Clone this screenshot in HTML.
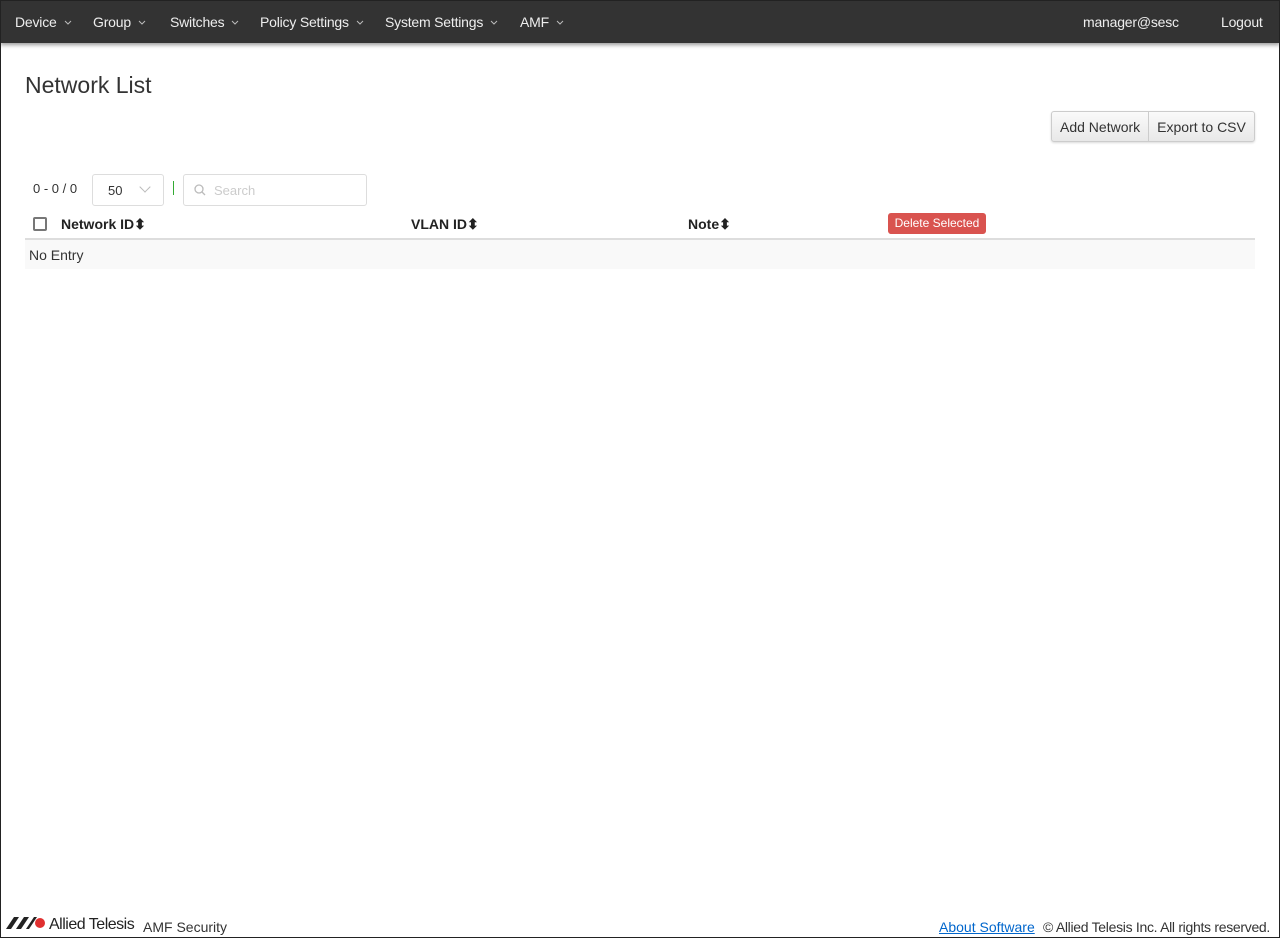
<!DOCTYPE html>
<html><head><meta charset="utf-8"><style>
*{box-sizing:border-box}
body{margin:0;width:1280px;height:938px;font-family:"Liberation Sans",sans-serif;font-size:14px;color:#333;background:#fff;position:relative;overflow:hidden}
.frame{position:absolute;inset:0;border:1px solid #222;pointer-events:none;z-index:10}
nav{position:absolute;left:0;top:0;width:1280px;height:43px;background:#333;box-shadow:0 2px 4px rgba(0,0,0,.4);color:#eee}
nav span{position:absolute;top:14px;font-size:14px;white-space:nowrap;letter-spacing:-.2px}
nav svg{margin-left:7px;vertical-align:2px}
h1{position:absolute;left:25px;top:72px;margin:0;font-weight:normal;font-size:23px;color:#333}
.btns{position:absolute;left:1051px;top:111px;height:31px;display:flex;border:1px solid #ccc;border-radius:3px;background:linear-gradient(#fafafa,#e8e8e8);box-shadow:0 1px 2px rgba(0,0,0,.15)}
.btns div{padding:7px 8px 0;font-size:14px;color:#333;white-space:nowrap}
.btns div+div{border-left:1px solid #ccc}
.cnt{position:absolute;left:33px;top:181px;font-size:13px}
.sel{position:absolute;left:92px;top:174px;width:72px;height:32px;border:1px solid #ddd;border-radius:3px;font-size:13px;padding:8px 0 0 15px}
.sel i{position:absolute;left:48px;top:8px;width:8px;height:8px;border-right:1px solid #bbb;border-bottom:1px solid #bbb;transform:rotate(45deg)}
.bar{position:absolute;left:173px;top:181px;width:1px;height:14px;background:#3a3}
.srch{position:absolute;left:183px;top:174px;width:184px;height:32px;border:1px solid #ddd;border-radius:3px;color:#ccc;font-size:13px;padding:8px 0 0 30px}
.srch svg{position:absolute;left:10px;top:9px}
.cb{position:absolute;left:33px;top:217px;width:14px;height:14px;border:2px solid #777;border-radius:2px}
.th{position:absolute;top:216px;font-weight:bold;font-size:14px;color:#222}
.del{position:absolute;left:888px;top:213px;width:98px;height:21px;background:#d9534f;color:#fff;font-size:12px;border-radius:3px;text-align:center;line-height:21px}
.line{position:absolute;left:25px;top:238px;width:1230px;height:2px;background:#ddd}
.row{position:absolute;left:25px;top:240px;width:1230px;height:29px;background:#f9f9f9;padding:7px 4px;font-size:14px}
.ft{position:absolute;top:919px;font-size:14px;white-space:nowrap}
</style></head><body>
<div class="frame"></div>
<nav>
<span style="left:15px">Device<svg width="8" height="5"><path d="M1 1l3 3 3-3" fill="none" stroke="#bbb"/></svg></span>
<span style="left:93px">Group<svg width="8" height="5"><path d="M1 1l3 3 3-3" fill="none" stroke="#bbb"/></svg></span>
<span style="left:170px">Switches<svg width="8" height="5"><path d="M1 1l3 3 3-3" fill="none" stroke="#bbb"/></svg></span>
<span style="left:260px">Policy Settings<svg width="8" height="5"><path d="M1 1l3 3 3-3" fill="none" stroke="#bbb"/></svg></span>
<span style="left:385px">System Settings<svg width="8" height="5"><path d="M1 1l3 3 3-3" fill="none" stroke="#bbb"/></svg></span>
<span style="left:520px">AMF<svg width="8" height="5"><path d="M1 1l3 3 3-3" fill="none" stroke="#bbb"/></svg></span>
<span style="left:1083px">manager@sesc</span>
<span style="left:1221px">Logout</span>
</nav>
<h1>Network List</h1>
<div class="btns"><div>Add Network</div><div>Export to CSV</div></div>
<div class="cnt">0 - 0 / 0</div>
<div class="sel">50<i></i></div>
<div class="bar"></div>
<div class="srch"><svg width="12" height="12" viewBox="0 0 12 12"><circle cx="5" cy="5" r="4" fill="none" stroke="#bbb" stroke-width="1.3"/><path d="M8 8l3 3" stroke="#bbb" stroke-width="1.3"/></svg>Search</div>
<div class="cb"></div>
<div class="th" style="left:61px">Network ID&#x2B0D;</div>
<div class="th" style="left:411px">VLAN ID&#x2B0D;</div>
<div class="th" style="left:688px">Note&#x2B0D;</div>
<div class="del">Delete Selected</div>
<div class="line"></div>
<div class="row">No Entry</div>
<svg style="position:absolute;left:6px;top:916px" width="40" height="14" viewBox="0 0 40 14"><path d="M0 13L8 1h5l-8 12z M10 13L18 1h5l-8 12z M20 13L28 1h3l-8 12z" fill="#222"/><circle cx="34" cy="7" r="5" fill="#e03030"/></svg>
<div class="ft" style="left:49px;font-size:16px;top:916px;letter-spacing:-.5px;color:#222">Allied Telesis</div>
<div class="ft" style="left:143px">AMF Security</div>
<div class="ft" style="left:939px;color:#0066cc;text-decoration:underline">About Software</div>
<div class="ft" style="left:1043px;letter-spacing:-.3px">© Allied Telesis Inc. All rights reserved.</div>
</body></html>
